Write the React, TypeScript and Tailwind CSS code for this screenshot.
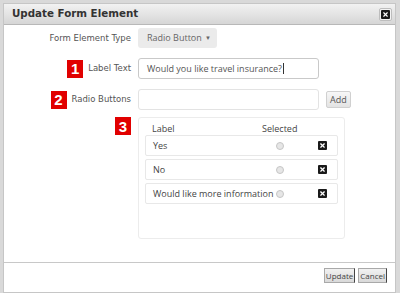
import { X } from "lucide-react";

const rows = ["Yes", "No", "Would like more information"];

function Badge({ n }: { n: number }) {
  return (
    <span className="flex h-[18px] w-4 items-center justify-center bg-[#e10000] font-['Liberation_Sans',sans-serif] text-[15px] font-bold leading-none text-white">
      {n}
    </span>
  );
}

function CloseBox() {
  return (
    <span className="flex h-[9px] w-[9px] items-center justify-center rounded-[1px] bg-[#1a1a1a]">
      <X size={7} strokeWidth={4} className="text-white" />
    </span>
  );
}

export default function App() {
  return (
    <div className="h-[293px] w-[400px] overflow-hidden bg-[#d9d9d9] pl-[3px] pt-[3px] font-['Open_Sans',sans-serif]">
      <div className="flex h-[290px] w-[393px] flex-col border border-[#c6c6c6] bg-white">
        {/* Title bar */}
        <div className="flex h-[21px] items-center justify-between border-b border-[#b8b8b8] bg-gradient-to-b from-[#f2f2f2] to-[#d6d6d6] pl-[8px] pr-[3px]">
          <span className="font-['DejaVu_Sans',sans-serif] text-[10.3px] font-bold text-[#333]">Update Form Element</span>
          <span className="flex h-[13px] w-[13px] items-center justify-center rounded-[2px] border border-[#bdbdbd] bg-[#f3f3f3]">
            <CloseBox />
          </span>
        </div>

        {/* Body */}
        <div className="flex flex-1 flex-col gap-[10px] pt-[3px] text-[10px] text-[#444]">
          <div className="flex items-center">
            <span className="w-[134px] pr-[7px] text-right font-['DejaVu_Sans',sans-serif] text-[8.5px] text-[#555]">Form Element Type</span>
            <div className="flex h-[20px] w-[79px] items-center justify-between rounded-[3px] bg-[#ebebeb] pl-[9px] pr-[6px] text-[9px] text-[#666]">
              <span>Radio Button</span>
              <span className="text-[6px]">▼</span>
            </div>
          </div>

          <div className="flex items-center">
            <div className="flex w-[134px] items-center justify-end gap-[5px] pr-[7px]">
              <Badge n={1} />
              <span className="font-['DejaVu_Sans',sans-serif] text-[8.5px] text-[#555]">Label Text</span>
            </div>
            <div className="flex h-[21px] w-[181px] items-center rounded-[3px] border border-[#c9c9c9] pl-[8px] text-[9px] text-[#555]">
              Would you like travel insurance?
              <span className="ml-px h-[11px] w-px bg-[#333]" />
            </div>
          </div>

          <div className="flex items-center">
            <div className="flex w-[134px] items-center justify-end gap-[5px] pr-[7px]">
              <Badge n={2} />
              <span className="font-['DejaVu_Sans',sans-serif] text-[8.5px] text-[#555]">Radio Buttons</span>
            </div>
            <div className="h-[21px] w-[181px] rounded-[3px] border border-[#e3e3e3]" />
            <span className="ml-[7px] rounded-[2px] border border-[#d0d0d0] bg-gradient-to-b from-[#f7f7f7] to-[#e3e3e3] px-[3px] py-px text-[9px] text-[#555]">
              Add
            </span>
          </div>

          <div className="-mt-[3px] flex items-start">
            <div className="flex w-[134px] justify-end pr-[7px]">
              <Badge n={3} />
            </div>
            <div className="flex h-[122px] w-[207px] flex-col rounded-[3px] border border-[#ececec] px-[6px] pt-[4px]">
              <div className="flex h-[13px] items-center text-[9px] text-[#444]">
                <span className="w-[117px] pl-[7px]">Label</span>
                <span>Selected</span>
              </div>
              <div className="flex flex-col gap-[3px]">
                {rows.map((r) => (
                  <div key={r} className="flex h-[21px] items-center rounded-[2px] border border-[#e8e8e8] pl-[7px] pr-[10px] text-[9px] text-[#444]">
                    <span className="w-[123px] whitespace-nowrap">{r}</span>
                    <span className="h-[8px] w-[8px] rounded-full border border-[#c6c6c6] bg-[#e6e6e6]" />
                    <span className="flex-1" />
                    <CloseBox />
                  </div>
                ))}
              </div>
            </div>
          </div>
        </div>

        {/* Footer */}
        <div className="flex h-[30px] items-start justify-end gap-[3px] border-t border-[#c8c8c8] pr-[8px] pt-[5px]">
          <span className="border border-[#a9a9a9] border-r-[#444] bg-gradient-to-b from-[#f2f2f2] to-[#d9d9d9] px-px text-[8px] leading-[13px] text-[#444]">Update</span>
          <span className="border border-[#a9a9a9] border-r-[#444] bg-gradient-to-b from-[#f2f2f2] to-[#d9d9d9] px-px text-[8px] leading-[13px] text-[#444]">Cancel</span>
        </div>
      </div>
    </div>
  );
}
